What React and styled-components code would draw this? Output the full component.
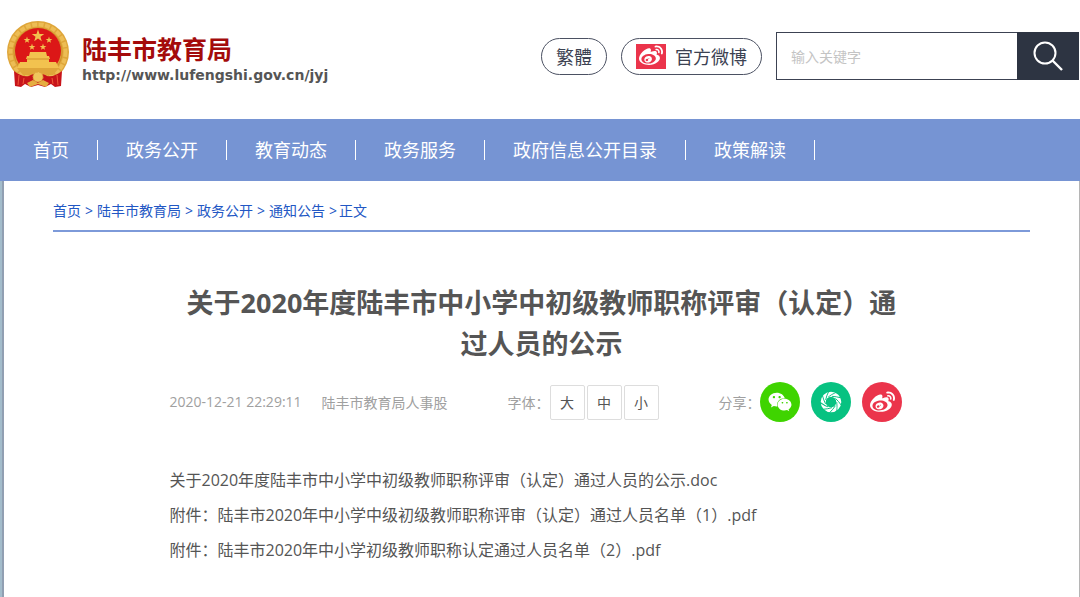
import React, { useState } from "react";
import styled, { createGlobalStyle } from "styled-components";
import { FaWeibo, FaWeixin } from "react-icons/fa";

const NAV_ITEMS = [
  "首页",
  "政务公开",
  "教育动态",
  "政务服务",
  "政府信息公开目录",
  "政策解读",
];

const CRUMBS = ["首页", "陆丰市教育局", "政务公开", "通知公告"];

const FONT_SIZES = [
  { label: "大", size: 18 },
  { label: "中", size: 16 },
  { label: "小", size: 14 },
];

const FILES = [
  "关于2020年度陆丰市中小学中初级教师职称评审（认定）通过人员的公示.doc",
  "附件：陆丰市2020年中小学中级初级教师职称评审（认定）通过人员名单（1）.pdf",
  "附件：陆丰市2020年中小学初级教师职称认定通过人员名单（2）.pdf",
];

const STAR = "M0-5L1.2-1.6L4.8-1.5L1.9.6L2.9 4L0 2L-2.9 4L-1.9.6L-4.8-1.5L-1.2-1.6Z";

const Emblem = () => (
  <svg width="62" height="67" viewBox="0 0 62 67" aria-hidden="true">
    <circle cx="31" cy="31" r="31" fill="#dfa63a" />
    <circle cx="31" cy="31" r="27.500" fill="none" stroke="#edbd55" strokeWidth="4" strokeDasharray="5 1.500" />
    <circle cx="31" cy="31" r="24" fill="none" stroke="#cf8f2b" />
    <circle cx="31" cy="30" r="23" fill="#dc1717" />
    <g fill="#f2c24f">
      <path d={STAR} transform="translate(31 15) scale(1.3)" />
      <path d={STAR} transform="translate(20 19) scale(.7)" />
      <path d={STAR} transform="translate(42 19) scale(.7)" />
      <path d={STAR} transform="translate(25 26) scale(.7)" />
      <path d={STAR} transform="translate(36 26) scale(.7)" />
      <path d="M23 31H39L40 35H42L43 38H19L20 35H22Z" />
      <path d="M20 38H42V41H49L52 47H10L13 41H20Z" />
    </g>
    <path d="M20 38H42" stroke="#d0902b" />
    <path d="M10 47H52L46 54H16Z" fill="#dfa63a" />
    <path d="M7 50C12 54 17 56 22 55C26 52 36 52 40 55C45 56 50 54 55 50L54 65L48 66L44 63L38 66L31 64L24 66L18 63L14 66L8 65Z" fill="#c8141a" />
    <path d="M12 54L11 64M17 57L16 63M50 54L51 64M45 57L46 63" stroke="#ef5a3a" fill="none" />
    <path d="M20 62L26 59L31 62L36 59L42 62L39 66L31 63L23 66Z" fill="#e5ae41" />
    <circle cx="31" cy="56" r="5" fill="#f0c65c" stroke="#dfa63a" strokeDasharray="2 1" />
  </svg>
);

const SearchIcon = () => (
  <svg width="32" height="32" viewBox="0 0 32 32" fill="none" stroke="#fff" strokeWidth="2" aria-hidden="true">
    <circle cx="13" cy="13" r="10.500" />
    <path d="M20.500 20.500L30 30" strokeWidth="2.400" />
  </svg>
);

const MomentsIcon = () => (
  <svg width="22" height="22" viewBox="-11 -11 22 22" fill="none" aria-hidden="true">
    <circle r="7.800" stroke="#fff" strokeWidth="5" />
    {[0, 40, 80, 120, 160, 200, 240, 280, 320].map((angle) => (
      <path
        key={angle}
        d="M-2.800-5Q.500-7.600 5-9.600"
        stroke="#07c281"
        strokeWidth=".9"
        transform={`rotate(${angle})`}
      />
    ))}
  </svg>
);

const App = () => {
  const [fontSize, setFontSize] = useState(16);
  const [keyword, setKeyword] = useState("");

  return (
    <>
      <GlobalStyle />
      <Header>
        <Brand href="#home">
          <Emblem />
          <BrandText>
            <BrandName>陆丰市教育局</BrandName>
            <BrandUrl>http://www.lufengshi.gov.cn/jyj</BrandUrl>
          </BrandText>
        </Brand>
        <Tools>
          <PillButton type="button">繁體</PillButton>
          <PillLink href="#weibo">
            <WeiboBadge>
              <FaWeibo size={24} />
            </WeiboBadge>
            官方微博
          </PillLink>
          <SearchForm onSubmit={(e) => e.preventDefault()}>
            <SearchInput
              type="text"
              aria-label="输入关键字"
              placeholder="输入关键字"
              value={keyword}
              onChange={(e) => setKeyword(e.target.value)}
            />
            <SearchButton type="submit" aria-label="搜索">
              <SearchIcon />
            </SearchButton>
          </SearchForm>
        </Tools>
      </Header>
      <Nav>
        {NAV_ITEMS.map((item) => (
          <NavLink key={item} href="#nav">
            {item}
          </NavLink>
        ))}
      </Nav>
      <Page>
        <Breadcrumb>
          {CRUMBS.map((crumb) => (
            <React.Fragment key={crumb}>
              <a href="#crumb">{crumb}</a>
              <span>&gt;</span>
            </React.Fragment>
          ))}
          <Current>正文</Current>
        </Breadcrumb>
        <Article>
          <Title>关于2020年度陆丰市中小学中初级教师职称评审（认定）通过人员的公示</Title>
          <Meta>
            <Source>
              <span>2020-12-21 22:29:11</span>
              <span>陆丰市教育局人事股</span>
            </Source>
            <MetaGroup>
              字体：
              <SizeButtons>
                {FONT_SIZES.map(({ label, size }) => (
                  <SizeButton key={label} type="button" onClick={() => setFontSize(size)}>
                    {label}
                  </SizeButton>
                ))}
              </SizeButtons>
            </MetaGroup>
            <MetaGroup>
              分享：
              <ShareButtons>
                <ShareButton type="button" aria-label="微信" $color="#3fd400">
                  <FaWeixin size={24} />
                </ShareButton>
                <ShareButton type="button" aria-label="朋友圈" $color="#07c281">
                  <MomentsIcon />
                </ShareButton>
                <ShareButton type="button" aria-label="微博" $color="#eb344b">
                  <FaWeibo size={25} />
                </ShareButton>
              </ShareButtons>
            </MetaGroup>
          </Meta>
          <FileList $size={fontSize}>
            {FILES.map((file) => (
              <li key={file}>
                <a href="#file">{file}</a>
              </li>
            ))}
          </FileList>
        </Article>
      </Page>
    </>
  );
};

const GlobalStyle = createGlobalStyle`
  * {
    box-sizing: border-box;
  }

  body {
    margin: 0;
    background: #fff;
    color: #555;
    font-family: "Open Sans", "Noto Sans CJK SC", sans-serif;
  }

  button,
  input {
    font-family: inherit;
  }

  a {
    color: inherit;
    text-decoration: none;
  }
`;

const Header = styled.header`
  display: flex;
  justify-content: space-between;
  padding: 21px 1px 28px 7px;
`;

const Brand = styled.a`
  display: flex;
  align-items: flex-start;
  gap: 13px;
`;

const BrandText = styled.div`
  display: flex;
  flex-direction: column;
  padding-top: 12px;
`;

const BrandName = styled.strong`
  color: #a40b0b;
  font-size: 25px;
  line-height: 32px;
`;

const BrandUrl = styled.span`
  color: #555;
  font-family: "DejaVu Sans", sans-serif;
  font-size: 14px;
  font-weight: bold;
  line-height: 20px;
`;

const Tools = styled.div`
  display: flex;
  align-items: center;
  gap: 14px;
  height: 70px;
`;

const PillButton = styled.button`
  display: flex;
  align-items: center;
  height: 37px;
  padding: 0 14px;
  border: 1px solid #4b5162;
  border-radius: 19px;
  background: #fff;
  color: #3c4252;
  font-size: 18px;
  cursor: pointer;
`;

const PillLink = styled(PillButton).attrs({ as: "a" })`
  gap: 9px;
`;

const WeiboBadge = styled.span`
  display: flex;
  align-items: center;
  justify-content: center;
  width: 30px;
  height: 25px;
  background: #eb344b;
  color: #fff;
`;

const SearchForm = styled.form`
  display: flex;
  width: 303px;
  height: 48px;
`;

const SearchInput = styled.input`
  flex: 1;
  min-width: 0;
  padding: 0 14px;
  border: 1px solid #3c4252;
  border-right: 0;
  font-size: 14px;
  outline: none;

  &::placeholder {
    color: #c4c4c4;
  }
`;

const SearchButton = styled.button`
  display: flex;
  align-items: center;
  justify-content: center;
  width: 62px;
  padding: 0;
  border: 0;
  background: #2d3442;
  cursor: pointer;
`;

const Nav = styled.nav`
  display: flex;
  align-items: center;
  height: 62px;
  padding-left: 5px;
  background: #7694d3;
`;

const NavLink = styled.a`
  padding: 0 28px;
  border-right: 1px solid #fff;
  color: #fff;
  font-size: 18px;
  line-height: 20px;
`;

const Page = styled.main`
  min-height: calc(100vh - 181px);
  padding: 14px 49px 0 51px;
  border-left: 2px solid #a3bccb;
  border-right: 1px solid #b5b5b5;
  box-shadow: inset 2px 0 #919fb2;
`;

const Breadcrumb = styled.nav`
  display: flex;
  gap: 4px;
  padding-bottom: 3px;
  border-bottom: 2px solid #7d9ad9;
  color: #2257c4;
  font-size: 14px;
  line-height: 32px;
`;

const Current = styled.span`
  margin-left: -2px;
`;

const Article = styled.article`
  max-width: 744px;
  margin: 0 auto;
  padding-top: 50px;
`;

const Title = styled.h1`
  margin: 0;
  padding: 0 8px;
  font-size: 27px;
  line-height: 41px;
  text-align: center;
`;

const Meta = styled.div`
  display: flex;
  align-items: center;
  justify-content: space-between;
  margin-top: 18px;
  padding-right: 11px;
  color: #a0a0a0;
  font-size: 14px;
`;

const Source = styled.div`
  display: flex;
  gap: 20px;
`;

const MetaGroup = styled.div`
  display: flex;
  align-items: center;
`;

const SizeButtons = styled.div`
  display: flex;
  gap: 2px;
`;

const SizeButton = styled.button`
  width: 35px;
  height: 35px;
  padding: 0;
  border: 1px solid #ddd;
  border-radius: 2px;
  background: #fff;
  color: #555;
  font-size: 14px;
  cursor: pointer;
`;

const ShareButtons = styled.div`
  display: flex;
  gap: 11px;
`;

const ShareButton = styled.button`
  display: flex;
  align-items: center;
  justify-content: center;
  width: 40px;
  height: 40px;
  padding: 0;
  border: 0;
  border-radius: 50%;
  background: ${({ $color }) => $color};
  color: #fff;
  cursor: pointer;
`;

const FileList = styled.ul`
  margin: 41px 0 0;
  padding: 0;
  font-size: ${({ $size }) => $size}px;
  line-height: 35px;
  list-style: none;
`;

export default App;
